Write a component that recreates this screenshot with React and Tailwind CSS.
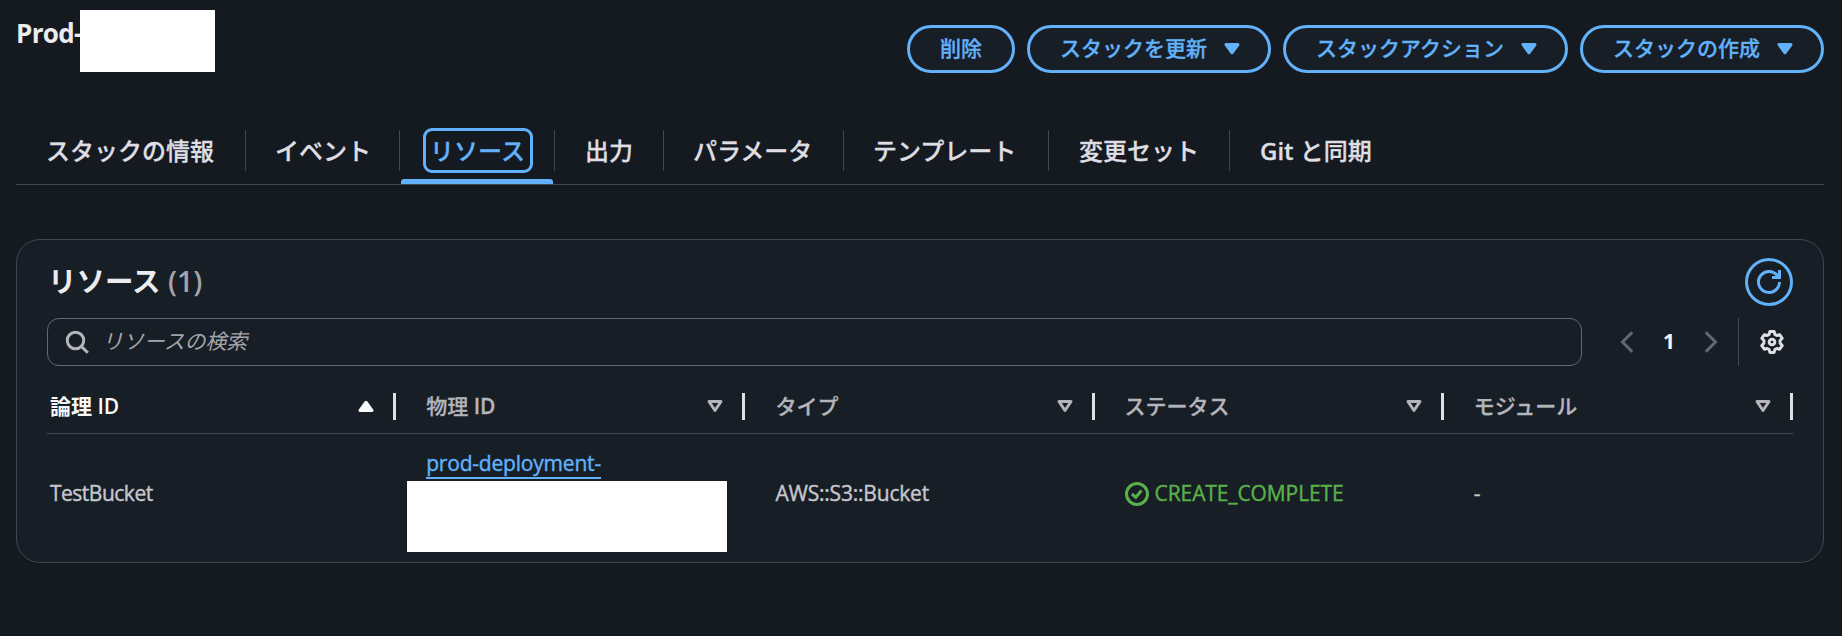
const TABS = [
  { label: "スタックの情報", width: "w-[230px] pl-[30px]" },
  { label: "イベント", width: "w-[154px] pl-[29px]" },
  { label: "リソース", width: "w-[155px]", active: true },
  { label: "出力", width: "w-[109px] pl-[30px]" },
  { label: "パラメータ", width: "w-[180px] pl-[29px]" },
  { label: "テンプレート", width: "w-[205px] pl-[29px]" },
  { label: "変更セット", width: "w-[181px] pl-[30px]" },
  { latin: "Git ", label: "と同期", width: "w-[180px] pl-[30px]", last: true },
];

const COLUMNS = [
  { name: "論理", latin: " ID" },
  { name: "物理", latin: " ID" },
  { name: "タイプ" },
  { name: "ステータス" },
  { name: "モジュール" },
];

function Caret() {
  return (
    <svg viewBox="0 0 16 16" className="h-6 w-6 shrink-0" fill="currentColor">
      <path
        d="M4 5h8l-4 5.500z"
        stroke="currentColor"
        strokeWidth="2"
        strokeLinejoin="round"
      />
    </svg>
  );
}

function ActionButton({ children, className, menu }) {
  return (
    <button
      className={`flex h-12 items-center rounded-full border-3 border-[#62b1fc] bg-[#171e25] pl-[30px] text-[21px] font-medium whitespace-nowrap text-[#62b1fc] [-webkit-text-stroke:0.3px] ${className}`}
    >
      <span className="-mt-px">{children}</span>
      {menu && (
        <span className="ml-[13px]">
          <Caret />
        </span>
      )}
    </button>
  );
}

function Tab({ tab }) {
  if (tab.active) {
    return (
      <div className={`flex h-[60px] flex-col items-center ${tab.width}`}>
        <div className="flex h-[41px] w-full items-center justify-center border-r border-[#424650] pl-px">
          <span className="flex h-[45px] w-[110px] shrink-0 items-center justify-center rounded-[9px] border-3 border-[#62b1fc] text-[#62b1fc]">
            {tab.label}
          </span>
        </div>
        <div className="mt-2 mr-[2px] h-[5px] w-[152px] rounded-t-[3px] bg-[#62b1fc]"></div>
      </div>
    );
  }

  return (
    <div
      className={`flex h-[41px] items-center whitespace-pre ${tab.width} ${tab.last ? "" : "border-r border-[#424650]"}`}
    >
      {tab.latin && <span className="font-semibold">{tab.latin}</span>}
      {tab.label}
    </div>
  );
}

function SortIcon({ active }) {
  return active ? (
    <svg viewBox="0 0 16 16" className="h-6 w-6" fill="#f9f9fa">
      <path
        d="M4 11h8l-4-5.500z"
        stroke="#f9f9fa"
        strokeWidth="2"
        strokeLinejoin="round"
      />
    </svg>
  ) : (
    <svg viewBox="0 0 16 16" className="h-6 w-6" fill="none">
      <path
        d="M4 5h8l-4 6z"
        stroke="#b4b4bb"
        strokeWidth="2"
        strokeLinejoin="round"
      />
    </svg>
  );
}

export default function App() {
  return (
    <div className="h-[636px] w-[1842px] overflow-hidden bg-[#151920] font-['Open_Sans','Noto_Sans_CJK_JP',sans-serif] text-[#dedee3]">
      {/* stack name and actions */}
      <header className="flex h-[130px] items-start justify-between pr-[18px] pl-4">
        <div className="flex">
          <h1 className="mt-[14px] w-16 text-[26px] leading-[38px] font-bold tracking-[-0.7px] text-[#ebebf0]">
            Prod-
          </h1>
          <div className="mt-[10px] h-[62px] w-[135px] bg-white"></div>
        </div>
        <div className="mt-[25px] flex gap-3">
          <ActionButton className="w-[108px]">削除</ActionButton>
          <ActionButton className="w-[244px]" menu>
            スタックを更新
          </ActionButton>
          <ActionButton className="w-[285px]" menu>
            スタックアクション
          </ActionButton>
          <ActionButton className="w-[244px]" menu>
            スタックの作成
          </ActionButton>
        </div>
      </header>

      {/* tabs */}
      <nav className="mr-[18px] ml-4 flex h-[55px] items-start border-b border-[#424650] text-2xl font-medium whitespace-nowrap [-webkit-text-stroke:0.3px]">
        {TABS.map((tab) => (
          <Tab key={tab.label} tab={tab} />
        ))}
      </nav>

      {/* resources panel */}
      <section className="mt-[54px] mr-[18px] ml-4 h-[324px] rounded-3xl border border-[#424650] bg-[#171e25] px-[30px] pt-[18px]">
        <div className="flex h-12 items-center justify-between">
          <h2 className="-mt-[2px] pl-px text-[28.5px] font-bold text-[#ebebf0]">
            リソース{" "}
            <span className="font-semibold text-[#a4a4ad]">(1)</span>
          </h2>
          <button className="flex h-12 w-12 items-center justify-center rounded-full border-3 border-[#62b1fc] text-[#62b1fc]">
            <svg
              viewBox="0 0 16 16"
              className="h-6 w-6"
              fill="none"
              stroke="currentColor"
              strokeWidth="2"
            >
              <path d="M15 8a7 7 0 1 1-2.500-5.400L15 5" />
              <path d="M15 0v5h-5" />
            </svg>
          </button>
        </div>

        <div className="mt-3 flex h-12 items-center">
          <div className="flex h-12 w-[1535px] items-center rounded-xl border border-[#656871] pl-[17px] text-[#a4a4ad]">
            <svg
              viewBox="0 0 16 16"
              className="h-6 w-6"
              fill="none"
              stroke="#b4b4bb"
              strokeWidth="2"
            >
              <circle cx="7" cy="7" r="5.500" />
              <path d="M10.800 10.800l4.400 4.400" />
            </svg>
            <span className="ml-[13px] text-[21px] tracking-[-0.1px] italic">
              リソースの検索
            </span>
          </div>
          <div className="flex w-[156px] items-center pl-[33px]">
            <svg
              viewBox="0 0 16 16"
              className="h-6 w-6"
              fill="none"
              stroke="#656871"
              strokeWidth="2"
            >
              <path d="M11.500 1.500L5 8l6.500 6.500" />
            </svg>
            <span className="w-[60px] text-center text-[21px] font-bold text-[#f3f3f7]">
              1
            </span>
            <svg
              viewBox="0 0 16 16"
              className="h-6 w-6"
              fill="none"
              stroke="#656871"
              strokeWidth="2"
            >
              <path d="M4.500 1.500L11 8l-6.500 6.500" />
            </svg>
          </div>
          <div className="h-12 w-px bg-[#424650]"></div>
          <svg
            viewBox="0 0 16 16"
            className="ml-[21px] h-6 w-6"
            fill="none"
            stroke="#dedee3"
            strokeWidth="2"
            strokeLinejoin="round"
          >
            <path d="M6.600 1h2.800l.5 1.900 1.300.8 1.900-.6 1.700 2.400-1.400 1.500v1.900l1.400 1.500-1.700 2.400-1.900-.5-1.300.7-.5 2H6.600l-.5-2-1.300-.7-1.900.5-1.700-2.400 1.400-1.500V7L1.200 5.500l1.700-2.400 1.900.6 1.300-.8z" />
            <circle cx="8" cy="8" r="1.900" />
          </svg>
        </div>

        {/* table header */}
        <div className="grid w-[1746px] grid-cols-5 border-b border-[#424650] text-[21px]">
          {COLUMNS.map((column, i) => (
            <div
              key={column.name}
              className={`flex h-[67px] items-center justify-between pt-[13px] ${i === 0 ? "pl-[3px] font-bold text-[#f9f9fa]" : "pl-[30px] font-medium text-[#b4b4bb] [-webkit-text-stroke:0.3px]"}`}
            >
              <span className="pt-px">
                {column.name}
                <span className="font-semibold">{column.latin}</span>
              </span>
              <div className="flex items-center gap-[15px]">
                <SortIcon active={i === 0} />
                <div className="h-[27px] w-[3px] bg-[#dedee3]"></div>
              </div>
            </div>
          ))}
        </div>

        {/* table row */}
        <div className="grid h-[119px] w-[1746px] grid-cols-5 items-center text-[21px] tracking-[-0.2px] text-[#c6c6cd] [-webkit-text-stroke:0.4px]">
          <div className="pt-px pl-[3px] tracking-[-0.5px]">TestBucket</div>
          <div className="self-start pt-[15px] pl-[11px]">
            <a className="ml-[19px] block w-fit border-b-2 border-[#62b1fc] leading-[28px] text-[#62b1fc]">
              prod-deployment-
            </a>
            <div className="mt-[2px] h-[71px] w-80 bg-white"></div>
          </div>
          <div className="pt-px pl-[30px]">AWS::S3::Bucket</div>
          <div className="flex items-center gap-[6px] pt-px pl-[30px] tracking-[-0.1px] text-[#5ab149]">
            <svg
              viewBox="0 0 16 16"
              className="h-6 w-6"
              fill="none"
              stroke="currentColor"
              strokeWidth="2"
            >
              <circle cx="8" cy="8" r="7" />
              <path d="M4.600 8l2.600 2.200 3.800-4.500" />
            </svg>
            CREATE_COMPLETE
          </div>
          <div className="pt-px pl-[30px]">-</div>
        </div>
      </section>
    </div>
  );
}
